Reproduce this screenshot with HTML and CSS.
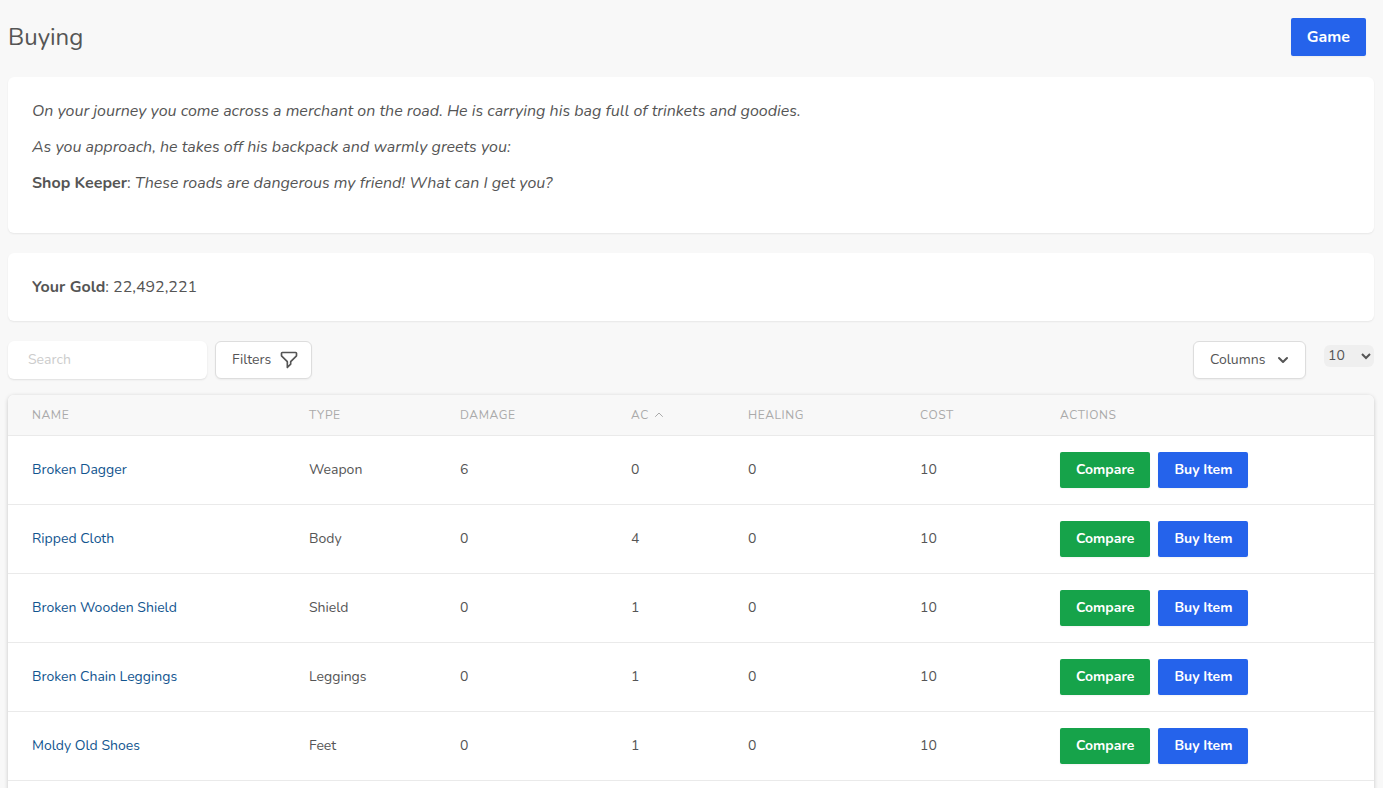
FILE: index.html
```html
<!DOCTYPE html>
<html lang="en">
<head>
<meta charset="utf-8">
<title>Buying</title>
<link rel="stylesheet" href="styles.css">
</head>
<body>
<main class="page">
  <header class="page-header">
    <h1 class="page-title">Buying</h1>
    <a class="btn btn-blue btn-lg" href="#game">Game</a>
  </header>

  <section class="card card-story">
    <p><em>On your journey you come across a merchant on the road. He is carrying his bag full of trinkets and goodies.</em></p>
    <p><em>As you approach, he takes off his backpack and warmly greets you:</em></p>
    <p><strong>Shop Keeper</strong>: <em>These roads are dangerous my friend! What can I get you?</em></p>
  </section>

  <section class="card card-gold">
    <p><strong>Your Gold</strong>: 22,492,221</p>
  </section>

  <div class="toolbar">
    <input class="search" type="text" placeholder="Search" aria-label="Search">
    <button class="tool-btn" type="button">Filters
      <svg class="icon-filter" viewBox="0 0 24 24" fill="none" stroke="currentColor" stroke-width="2" stroke-linecap="round" stroke-linejoin="round"><path d="M3 4a1 1 0 0 1 1-1h16a1 1 0 0 1 1 1v2.586a1 1 0 0 1-.293.707l-6.414 6.414a1 1 0 0 0-.293.707V17l-4 4v-6.586a1 1 0 0 0-.293-.707L3.293 7.293A1 1 0 0 1 3 6.586V4z"/></svg>
    </button>
    <button class="tool-btn tool-columns" type="button">Columns
      <svg class="icon-chevron" viewBox="0 0 20 20" fill="currentColor"><path fill-rule="evenodd" d="M5.293 7.293a1 1 0 0 1 1.414 0L10 10.586l3.293-3.293a1 1 0 1 1 1.414 1.414l-4 4a1 1 0 0 1-1.414 0l-4-4a1 1 0 0 1 0-1.414z"/></svg>
    </button>
    <select class="per-page" aria-label="Rows per page"><option>10</option><option>25</option><option>50</option></select>
  </div>

  <div class="table-wrap">
    <table class="items">
      <colgroup><col class="c-name"><col class="c-type"><col class="c-damage"><col class="c-ac"><col class="c-healing"><col class="c-cost"><col></colgroup>
      <thead>
        <tr><th>Name</th><th>Type</th><th>Damage</th><th><span class="sorted">AC <svg class="icon-sort" viewBox="0 0 24 24" fill="none" stroke="currentColor" stroke-width="2" stroke-linecap="round" stroke-linejoin="round"><path d="m5 15 7-7 7 7"/></svg></span></th><th>Healing</th><th>Cost</th><th>Actions</th></tr>
      </thead>
      <tbody>
        <tr><td><a href="#item">Broken Dagger</a></td><td>Weapon</td><td>6</td><td>0</td><td>0</td><td>10</td><td><div class="actions"><a class="btn btn-green" href="#compare">Compare</a><button class="btn btn-blue" type="button">Buy Item</button></div></td></tr>
        <tr><td><a href="#item">Ripped Cloth</a></td><td>Body</td><td>0</td><td>4</td><td>0</td><td>10</td><td><div class="actions"><a class="btn btn-green" href="#compare">Compare</a><button class="btn btn-blue" type="button">Buy Item</button></div></td></tr>
        <tr><td><a href="#item">Broken Wooden Shield</a></td><td>Shield</td><td>0</td><td>1</td><td>0</td><td>10</td><td><div class="actions"><a class="btn btn-green" href="#compare">Compare</a><button class="btn btn-blue" type="button">Buy Item</button></div></td></tr>
        <tr><td><a href="#item">Broken Chain Leggings</a></td><td>Leggings</td><td>0</td><td>1</td><td>0</td><td>10</td><td><div class="actions"><a class="btn btn-green" href="#compare">Compare</a><button class="btn btn-blue" type="button">Buy Item</button></div></td></tr>
        <tr><td><a href="#item">Moldy Old Shoes</a></td><td>Feet</td><td>0</td><td>1</td><td>0</td><td>10</td><td><div class="actions"><a class="btn btn-green" href="#compare">Compare</a><button class="btn btn-blue" type="button">Buy Item</button></div></td></tr>
        <tr><td></td><td></td><td></td><td></td><td></td><td></td><td></td></tr>
      </tbody>
    </table>
  </div>
</main>
</body>
</html>
```
FILE: styles.css
```css
*, *::before, *::after { box-sizing: border-box; }

body {
  margin: 0;
  background: #f8f8f8;
  color: #555;
  font: 16px/24px Nunito, Lato, "Noto Sans", sans-serif;
  -webkit-font-smoothing: antialiased;
}

h1, p { margin: 0; }
a { text-decoration: none; }
button, input, select { font: inherit; color: inherit; }
strong { font-weight: 700; }

.page { padding: 18px 9px 8px 8px; }

.page-header {
  display: flex;
  align-items: center;
  justify-content: space-between;
  padding-right: 8px;
  margin-bottom: 21px;
}
.page-title { font-size: 24px; line-height: 32px; font-weight: 400; }

.btn {
  display: inline-block;
  border: 0;
  border-radius: 2px;
  padding: 8px 16px;
  color: #fff;
  font-size: 14px;
  line-height: 20px;
  font-weight: 700;
  text-align: center;
  box-shadow: 0 1px 2px rgba(0, 0, 0, 0.05);
  cursor: pointer;
}
.btn-lg { font-size: 16px; line-height: 22px; }
.btn-blue { background: #2563eb; }
.btn-green { background: #16a34a; }

.card {
  background: #fff;
  border-radius: 6px;
  box-shadow: 0 1px 2px rgba(0, 0, 0, 0.07);
  padding: 22px 24px;
}
.card-story { margin-bottom: 20px; padding-bottom: 38px; }
.card-story p + p { margin-top: 12px; }
.card-gold { margin-bottom: 20px; }

.toolbar {
  display: flex;
  align-items: flex-start;
  gap: 8px;
  margin-bottom: 16px;
  font-size: 14px;
  line-height: 20px;
}
.search {
  width: 199px;
  height: 38px;
  padding: 8px 20px 10px;
  border: 0;
  border-radius: 6px;
  background: #fff;
  box-shadow: 0 1px 2px rgba(0, 0, 0, 0.1);
}
.search::placeholder { color: #ccc; opacity: 1; }
.tool-btn {
  display: flex;
  align-items: center;
  justify-content: space-between;
  width: 97px;
  height: 38px;
  padding: 0 12px 0 16px;
  border: 1px solid #ddd;
  border-radius: 6px;
  background: #fff;
  box-shadow: 0 1px 2px rgba(0, 0, 0, 0.05);
}
.tool-columns { width: 113px; margin-left: auto; }
.icon-filter { width: 20px; height: 20px; }
.icon-chevron { width: 20px; height: 20px; }
.per-page {
  width: 50px;
  height: 22px;
  margin: 4px 0 0 10px;
  padding-bottom: 2px;
  border: 0;
  border-radius: 6px;
  background: #efefef;
}

.table-wrap {
  overflow: hidden;
  border-radius: 6px;
  background: #fff;
  box-shadow: 0 1px 4px rgba(0, 0, 0, 0.2);
}
.items {
  width: 100%;
  table-layout: fixed;
  border-collapse: separate;
  border-spacing: 0;
  font-size: 14px;
  line-height: 20px;
}
.c-name { width: 277px; }
.c-type { width: 151px; }
.c-damage { width: 171px; }
.c-ac { width: 117px; }
.c-healing { width: 172px; }
.c-cost { width: 140px; }
.items th {
  height: 41px;
  padding: 0 24px;
  background: #f8f8f8;
  color: #aaa;
  font-size: 12px;
  line-height: 16px;
  font-weight: 400;
  letter-spacing: 0.05em;
  text-align: left;
  text-transform: uppercase;
  white-space: nowrap;
}
.items td { height: 69px; padding: 0 24px; white-space: nowrap; }
.items th, .items td { border-bottom: 1px solid #eaeaea; }
.items td a:not(.btn) { color: #12558f; }
.sorted { display: flex; align-items: center; gap: 4px; }
.icon-sort { width: 12px; height: 12px; }
.actions { display: flex; gap: 8px; }
```
